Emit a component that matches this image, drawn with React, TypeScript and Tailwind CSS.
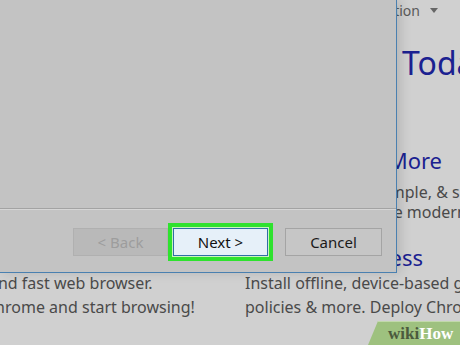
const bodyText = 'text-[16px] leading-[24px] text-[#4a4a4a] whitespace-nowrap';

function Page() {
  return (
    <div className="grid grid-cols-[245px_1fr] h-full">
      <div className="flex flex-col justify-end pb-[26px] overflow-hidden">
        <div className={`${bodyText} ml-[-11px]`}>and fast web browser.</div>
        <div className={`${bodyText} ml-[-15px]`}>Chrome and start browsing!</div>
      </div>
      <div className="flex flex-col overflow-hidden">
        <div className="flex justify-end items-center h-[20px] pr-[22px] text-[14px] text-[#5a5a5a] gap-[10px]">
          <span>Chrome Edition</span>
          <span className="w-0 h-0 border-l-[4px] border-r-[4px] border-t-[5px] border-l-transparent border-r-transparent border-t-[#666]" />
        </div>
        <div className="mt-[23px] pl-[157px] text-[32px] leading-[40px] text-[#1b2190] whitespace-nowrap">Today</div>
        <div className="mt-[63px] w-[197px] flex justify-end text-[22px] leading-[28px] text-[#1b2190] whitespace-nowrap">
          <span>Learn More</span>
        </div>
        <div className="mt-[8px] pl-[133px] text-[16px] leading-[20px] text-[#4a4a4a] whitespace-nowrap">
          <div>simple, &amp; secure</div>
          <div>the modern web</div>
        </div>
        <div className="mt-[21px] w-[178px] flex justify-end text-[22px] leading-[28px] text-[#1b2190] whitespace-nowrap">
          <span>Chrome for Business</span>
        </div>
        <div className={bodyText}>Install offline, device-based group</div>
        <div className={bodyText}>policies &amp; more. Deploy Chrome</div>
      </div>
    </div>
  );
}

function Dialog() {
  return (
    <div className="absolute top-0 left-0 w-[397px] h-[273px] bg-[#c3c3c3] border-r border-b border-[#4a80b0] shadow-[4px_0_10px_rgba(0,0,0,0.12)] flex flex-col">
      <div className="h-[208px]" />
      <div className="border-t border-[#a3a3a3] border-b border-b-[#d6d6d6]" />
      <div className="flex items-start pt-[18px] pl-[73px] pr-[14px]">
        <button className="w-[95px] h-[28px] bg-[#b9b9b9] border border-[#b0b0b0] text-[15px] text-[#9d9d9d]">
          &lt; Back
        </button>
        <button className="ml-[5px] w-[95px] h-[28px] bg-[#e6f0f9] border-[1.5px] border-[#2f6ea6] text-[15px] text-[#111] shadow-[0_0_0_1px_#c9f3bf,0_0_0_5px_#2ee22e]">
          Next &gt;
        </button>
        <button className="ml-auto w-[97px] h-[28px] bg-[#c6c6c6] border border-[#a4a4a4] text-[15px] text-[#1a1a1a]">
          Cancel
        </button>
      </div>
    </div>
  );
}

function WikiBadge() {
  return (
    <div className="absolute right-0 bottom-0 w-[92px] h-[24px] bg-[#9ec17f] border-t border-[#c2d9ab] [clip-path:polygon(10px_0,100%_0,100%_100%,0_100%)] flex items-center pl-[20px] font-['Liberation_Serif',serif] font-bold text-[17px] leading-none">
      <span className="text-[#4b5a3d]">wiki</span>
      <span className="text-white">How</span>
    </div>
  );
}

export default function App() {
  return (
    <div className="relative w-[460px] h-[345px] overflow-hidden bg-[#d0d0d0] font-['Noto_Sans',sans-serif]">
      <Page />
      <Dialog />
      <WikiBadge />
    </div>
  );
}
